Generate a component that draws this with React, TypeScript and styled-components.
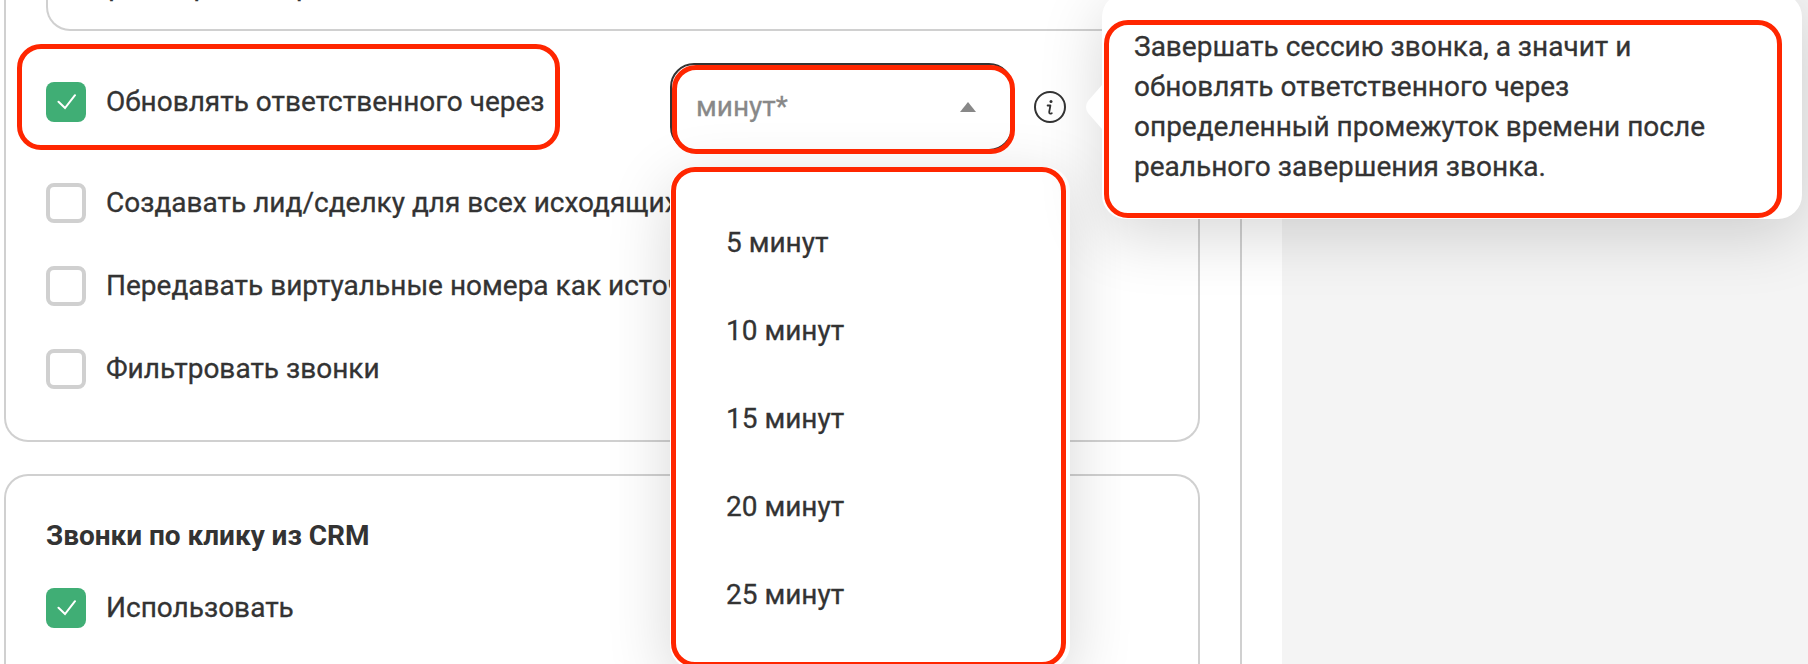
import React from "react";
import styled, { createGlobalStyle } from "styled-components";

const Global = createGlobalStyle`
  *, *::before, *::after { box-sizing: border-box; }
  html, body { margin: 0; padding: 0; background: #f4f4f4; overflow: hidden; }
  body {
    font-family: Roboto, "Liberation Sans", sans-serif;
    font-size: 28px;
    line-height: 40px;
    color: #333;
    -webkit-text-stroke: 0.3px currentColor;
  }
`;

const Page = styled.div`
  position: relative;
  width: 1808px;
  height: 664px;
  overflow: hidden;
  display: flex;
`;

const Surface = styled.main`
  width: 1282px;
  height: 100%;
  background: #fff;
  display: flex;
`;

const Column = styled.div`
  width: 1242px;
  height: 100%;
  padding-left: 4px;
  border-right: 2px solid #d0d0d0;
  display: flex;
  flex-direction: column;
  gap: 32px;
`;

const Card = styled.section<{ $edge: "top" | "bottom" }>`
  width: 1196px;
  height: ${(p) => (p.$edge === "bottom" ? "442px" : "230px")};
  flex: none;
  border: 2px solid #d0d0d0;
  border-radius: ${(p) => (p.$edge === "bottom" ? "0 0 24px 24px" : "24px 24px 0 0")};
  border-${(p) => (p.$edge === "bottom" ? "top" : "bottom")}: none;
  padding: ${(p) => (p.$edge === "bottom" ? "0 40px" : "40px 40px 0")};
  display: flex;
  flex-direction: column;
`;

const Field = styled.div`
  height: 31px;
  flex: none;
  border: 2px solid #d0d0d0;
  border-top: none;
  border-radius: 0 0 24px 24px;
  padding: 0 14px;
  overflow: hidden;
`;

const FieldText = styled.div`
  margin-top: -34px;
  white-space: nowrap;
`;

const OptionRow = styled.div<{ $gap: number }>`
  display: flex;
  align-items: center;
  gap: 20px;
  height: 40px;
  margin-top: ${(p) => p.$gap}px;
  white-space: nowrap;
`;

const Box = styled.span<{ $on?: boolean }>`
  width: 40px;
  height: 40px;
  flex: none;
  display: grid;
  place-items: center;
  border-radius: 8px;
  border: ${(p) => (p.$on ? "none" : "4px solid #d0d0d0")};
  background: ${(p) => (p.$on ? "#40ae75" : "#fff")};
`;

const Label = styled.span`
  letter-spacing: 0;
`;

const Title = styled.h2`
  margin: 0;
  font-size: 28px;
  line-height: 40px;
  font-weight: 700;
  letter-spacing: -0.04px;
  -webkit-text-stroke: 0;
`;

const Select = styled.div`
  position: absolute;
  left: 670px;
  top: 63px;
  width: 343px;
  height: 88px;
  border: 2px solid #333;
  border-radius: 24px;
  padding: 0 35px 1px 24px;
  display: flex;
  align-items: center;
  justify-content: space-between;
  color: #888;
`;

const InfoIcon = styled.svg`
  position: absolute;
  left: 1034px;
  top: 91px;
`;

const Menu = styled.ul`
  position: absolute;
  left: 670px;
  top: 167px;
  width: 400px;
  height: 502px;
  margin: 0;
  padding: 32px 0;
  list-style: none;
  background: #fff;
  border-radius: 24px;
  box-shadow: 0 16px 64px rgba(0, 0, 0, 0.16);
`;

const MenuItem = styled.li`
  height: 88px;
  padding: 0 56px;
  display: flex;
  align-items: center;
`;

const Tooltip = styled.aside`
  position: absolute;
  left: 1102px;
  top: -7px;
  width: 700px;
  height: 226px;
  padding: 34px 32px;
  background: #fff;
  border-radius: 24px;
  box-shadow: 0 16px 64px rgba(0, 0, 0, 0.16);
`;

const TooltipText = styled.p`
  margin: 0;
  width: 600px;
`;

const Arrow = styled.svg`
  position: absolute;
  left: -16px;
  top: 89px;
`;

const Highlight = styled.div<{ $x: number; $y: number; $w: number; $h: number }>`
  position: absolute;
  left: ${(p) => p.$x}px;
  top: ${(p) => p.$y}px;
  width: ${(p) => p.$w}px;
  height: ${(p) => p.$h}px;
  border: 5px solid #ff2600;
  border-radius: 24px;
  pointer-events: none;
`;

const Tick = () => (
  <svg width="20" height="16" viewBox="0 0 20 16" fill="none">
    <path d="M2.5 7.7L9 14L19 1.2" stroke="#fff" strokeWidth="2" strokeLinecap="round" />
  </svg>
);

const Check = ({ label, on, gap }: { label: string; on?: boolean; gap: number }) => (
  <OptionRow $gap={gap}>
    <Box $on={on}>{on && <Tick />}</Box>
    <Label>{label}</Label>
  </OptionRow>
);

const minutes = [5, 10, 15, 20, 25];

export default function App() {
  return (
    <>
      <Global />
      <Page>
        <Surface>
          <Column>
            <Card $edge="bottom">
              <Field>
                <FieldText>Второй картой маркетинг,</FieldText>
              </Field>
              <Check on gap={51} label="Обновлять ответственного через" />
              <Check gap={61} label="Создавать лид/сделку для всех исходящих" />
              <Check gap={43} label="Передавать виртуальные номера как источник" />
              <Check gap={43} label="Фильтровать звонки" />
            </Card>
            <Card $edge="top">
              <Title>Звонки по клику из CRM</Title>
              <Check on gap={32} label="Использовать" />
            </Card>
          </Column>
        </Surface>

        <Select>
          <span>минут*</span>
          <svg width="16" height="10" viewBox="0 0 16 10">
            <path d="M8 0L16 10H0Z" fill="#888" />
          </svg>
        </Select>

        <InfoIcon width="32" height="32" viewBox="0 0 32 32" fill="none" stroke="#333">
          <circle cx="16" cy="16" r="15" strokeWidth="2" />
          <path d="M13.6 14.5H16.4L15.2 21C15.1 22.6 16.2 23 17.8 22.2" strokeWidth="1.8" strokeLinecap="round" strokeLinejoin="round" />
          <circle cx="17" cy="10.5" r="1.5" fill="#333" stroke="none" />
        </InfoIcon>

        <Menu>
          {minutes.map((m) => (
            <MenuItem key={m}>{m} минут</MenuItem>
          ))}
        </Menu>

        <Tooltip>
          <Arrow width="18" height="50" viewBox="0 0 18 50">
            <path d="M18 0L16 3L2 19Q-2 25 2 31L16 47L18 50Z" fill="#fff" />
          </Arrow>
          <TooltipText>
            Завершать сессию звонка, а значит и обновлять ответственного через определенный
            промежуток времени после реального завершения звонка.
          </TooltipText>
        </Tooltip>

        <Highlight $x={17} $y={44} $w={543} $h={106} />
        <Highlight $x={672} $y={65} $w={343} $h={89} />
        <Highlight $x={671} $y={167} $w={395} $h={500} />
        <Highlight $x={1104} $y={20} $w={678} $h={198} />
      </Page>
    </>
  );
}
